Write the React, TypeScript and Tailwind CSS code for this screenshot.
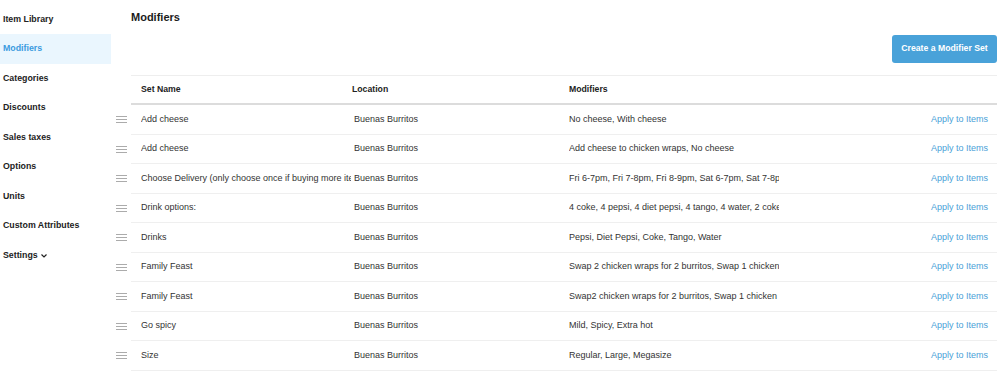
import { Fragment } from "react";

const navItems = [
  "Item Library",
  "Modifiers",
  "Categories",
  "Discounts",
  "Sales taxes",
  "Options",
  "Units",
  "Custom Attributes",
];

const rows = [
  { name: "Add cheese", location: "Buenas Burritos", mods: "No cheese, With cheese" },
  { name: "Add cheese", location: "Buenas Burritos", mods: "Add cheese to chicken wraps, No cheese" },
  {
    name: "Choose Delivery (only choose once if buying more items)",
    location: "Buenas Burritos",
    mods: "Fri 6-7pm, Fri 7-8pm, Fri 8-9pm, Sat 6-7pm, Sat 7-8pm, Sat 8-9pm",
  },
  {
    name: "Drink options:",
    location: "Buenas Burritos",
    mods: "4 coke, 4 pepsi, 4 diet pepsi, 4 tango, 4 water, 2 coke, 2 pepsi",
  },
  { name: "Drinks", location: "Buenas Burritos", mods: "Pepsi, Diet Pepsi, Coke, Tango, Water" },
  {
    name: "Family Feast",
    location: "Buenas Burritos",
    mods: "Swap 2 chicken wraps for 2 burritos, Swap 1 chicken wrap for 1 burrito",
  },
  {
    name: "Family Feast",
    location: "Buenas Burritos",
    mods: "Swap2 chicken wraps for 2 burritos, Swap 1 chicken wrap for 1 burrito",
  },
  { name: "Go spicy", location: "Buenas Burritos", mods: "Mild, Spicy, Extra hot" },
  { name: "Size", location: "Buenas Burritos", mods: "Regular, Large, Megasize" },
];

function DragHandle() {
  return (
    <svg width="11" height="7" viewBox="0 0 11 7" className="block">
      <path d="M0 0.5H11M0 3.5H11M0 6.5H11" stroke="#ababab" strokeWidth="1" />
    </svg>
  );
}

export default function App() {
  return (
    <div className="flex w-[999px] h-[378px] overflow-hidden bg-white font-['Liberation_Sans',Arial,sans-serif] text-[#333]">
      {/* ── Sidebar ── */}
      <nav className="w-[111px] shrink-0 pt-[4.5px]">
        {navItems.map((label) => {
          const active = label === "Modifiers";
          return (
            <div
              key={label}
              className={
                active
                  ? "h-[29.5px] flex items-center pl-[3px] text-[8.8px] font-bold text-[#3b9be0] bg-[#eaf6fe]"
                  : "h-[29.5px] flex items-center pl-[3px] text-[8.8px] font-bold text-[#222]"
              }
            >
              {label}
            </div>
          );
        })}
        <div className="h-[29.5px] flex items-center gap-[3px] pl-[3px] text-[8.8px] font-bold text-[#222]">
          Settings
          <svg width="6" height="4" viewBox="0 0 6 4" className="mt-[1px]">
            <path d="M0.5 0.5L3 3L5.5 0.5" fill="none" stroke="#222" strokeWidth="1.2" />
          </svg>
        </div>
      </nav>

      {/* ── Main ── */}
      <main className="flex-1 flex flex-col pr-[2px]">
        <h1 className="pl-[20px] pt-[10px] mb-[11px] text-[11px] leading-[14px] font-bold text-[#1b1b1b]">
          Modifiers
        </h1>

        <div className="flex justify-end">
          <button className="h-[28px] w-[105px] rounded-[3px] bg-[#49a2d9] text-white text-[8.7px] font-bold">
            Create a Modifier Set
          </button>
        </div>

        <div className="mt-[12px]">
          {/* header */}
          <div className="flex">
            <div className="w-[20px] shrink-0" />
            <div className="flex-1 flex items-center h-[30px] pl-[10px] border-t border-[#eeeeee] border-b-2 border-b-[#dcdcdc] text-[8.7px] font-bold text-[#222]">
              <div className="w-[211px]">Set Name</div>
              <div className="w-[217px]">Location</div>
              <div className="w-[210px]">Modifiers</div>
            </div>
          </div>

          {rows.map((r, i) => (
            <Fragment key={i}>
              <div className="flex h-[29.5px]">
                <div className="w-[20px] shrink-0 flex items-center justify-center">
                  <DragHandle />
                </div>
                <div className="flex-1 flex items-center pl-[10px] border-b border-[#efefef] text-[9px] text-[#333]">
                  <div className="w-[210px] mr-[3px] overflow-hidden whitespace-nowrap">{r.name}</div>
                  <div className="w-[215px] overflow-hidden whitespace-nowrap">{r.location}</div>
                  <div className="w-[210px] overflow-hidden whitespace-nowrap">{r.mods}</div>
                  <div className="flex-1 text-right pr-[9px] text-[#4a9fd8]">Apply to Items</div>
                </div>
              </div>
            </Fragment>
          ))}
        </div>
      </main>
    </div>
  );
}
